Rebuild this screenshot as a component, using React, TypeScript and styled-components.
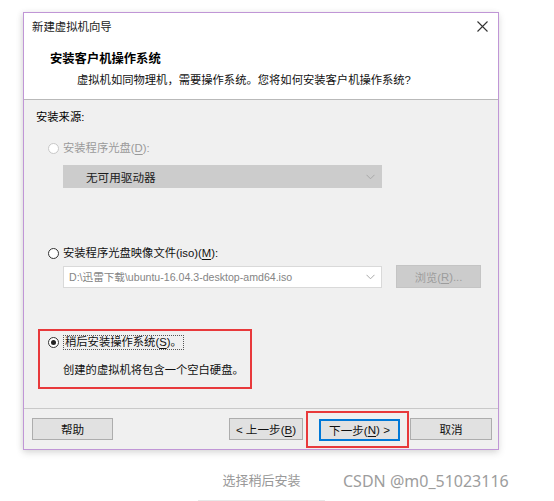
import styled, { createGlobalStyle } from 'styled-components'

const GlobalStyle = createGlobalStyle`
  html, body {
    margin: 0;
    padding: 0;
    background: #ffffff;
  }
  body {
    font-family: "Liberation Sans", "Noto Sans CJK SC", sans-serif;
    font-size: 11.3px;
    color: #000;
  }
  * {
    box-sizing: border-box;
  }
`

const Page = styled.div`
  width: 554px;
  height: 501px;
  padding: 12px 0 0 23px;
  overflow: hidden;
`

const Window = styled.div`
  width: 476px;
  height: 438px;
  border: 1px solid #c096d6;
  background: #f0f0f0;
  display: flex;
  flex-direction: column;
  box-shadow: 0 3px 7px rgba(0, 0, 0, 0.13), -2px 0 6px rgba(0, 0, 0, 0.06);
`

const TitleBar = styled.div`
  height: 28px;
  background: #fff;
  display: flex;
  align-items: center;
  justify-content: space-between;
  padding: 0 10px 1px 8px;
  font-size: 11.4px;
  line-height: 16px;
  color: #1a1a1a;
`

const Header = styled.div`
  height: 59px;
  background: #fff;
  border-bottom: 1px solid #b9b9b9;
  padding: 10px 0 0 26px;
`

const HeaderTitle = styled.div`
  font-size: 12.3px;
  font-weight: 700;
  line-height: 17px;
`

const HeaderText = styled.div`
  line-height: 16px;
  margin: 4px 0 0 27px;
  color: #111;
`

const Body = styled.div`
  flex: 1;
  padding: 9px 0 0 12px;
  display: flex;
  flex-direction: column;
  align-items: flex-start;
`

const GroupLabel = styled.div`
  line-height: 16px;
`

const OptionRow = styled.label<{ $top: number; $indent?: number; $disabled?: boolean }>`
  display: flex;
  align-items: center;
  gap: 4px;
  margin: ${(p) => p.$top}px 0 0 ${(p) => p.$indent ?? 12}px;
  line-height: 16px;
  white-space: nowrap;
  color: ${(p) => (p.$disabled ? '#9a9a9a' : '#111')};
`

const Radio = styled.span<{ $checked?: boolean; $disabled?: boolean }>`
  width: 11px;
  height: 11px;
  border-radius: 50%;
  border: 1px solid ${(p) => (p.$disabled ? '#c8c8c8' : '#333')};
  background: #fff;
  display: flex;
  align-items: center;
  justify-content: center;
  flex-shrink: 0;

  &::after {
    content: '';
    display: ${(p) => (p.$checked ? 'block' : 'none')};
    width: 5px;
    height: 5px;
    border-radius: 50%;
    background: #222;
  }
`

const Key = styled.span`
  text-decoration: underline;
  text-underline-offset: 2px;
`

const FieldRow = styled.div<{ $top: number }>`
  display: flex;
  align-items: center;
  gap: 14px;
  margin: ${(p) => p.$top}px 0 0 27px;
`

const Select = styled.div<{ $variant: 'disabled' | 'input' }>`
  width: 319px;
  height: ${(p) => (p.$variant === 'disabled' ? 23 : 22)}px;
  display: flex;
  align-items: center;
  justify-content: space-between;
  white-space: nowrap;
  font-size: ${(p) => (p.$variant === 'disabled' ? 11.6 : 10.6)}px;
  padding: ${(p) => (p.$variant === 'disabled' ? '0 6px 0 22px' : '0 6px 0 5px')};
  background: ${(p) => (p.$variant === 'disabled' ? '#cccccc' : '#ffffff')};
  border: 1px solid ${(p) => (p.$variant === 'disabled' ? '#cccccc' : '#d9d9d9')};
  color: ${(p) => (p.$variant === 'disabled' ? '#1a1a1a' : '#858585')};
`

const Chevron = () => (
  <svg width="9" height="6" viewBox="0 0 9 6">
    <polyline points="0.5,0.8 4.5,4.8 8.5,0.8" fill="none" stroke="#a8a8a8" strokeWidth="1" />
  </svg>
)

const BrowseButton = styled.div`
  width: 85px;
  height: 23px;
  background: #cccccc;
  border: 1px solid #c4c4c4;
  color: #9c9c9c;
  display: flex;
  align-items: center;
  justify-content: center;
`

const Highlight = styled.div`
  width: 214px;
  height: 60px;
  margin: 41px 0 0 2px;
  border: 2px solid #e8393b;
  padding: 4px 0 0 8px;
`

const FocusLabel = styled.span`
  border: 1px dotted #555;
  line-height: 13px;
  padding: 0 1px;
`

const Description = styled.div`
  margin: 12px 0 0 15px;
  line-height: 16px;
  white-space: nowrap;
  color: #111;
`

const Footer = styled.div`
  height: 41px;
  border-top: 1px solid #c9c9c9;
  display: flex;
  align-items: center;
  padding: 0 6px 0 8px;
`

const Button = styled.div<{ $width: number; $primary?: boolean }>`
  width: ${(p) => p.$width}px;
  height: 22px;
  background: #e1e1e1;
  border: ${(p) => (p.$primary ? '2px solid #0078d7' : '1px solid #adadad')};
  font-size: 11.6px;
  display: flex;
  align-items: center;
  justify-content: center;
  white-space: pre;
  color: #111;
`

const Spacer = styled.div`
  flex: 1;
`

const NextFrame = styled.div`
  margin: 0 1px 0 3px;
  border: 2px solid #e8393b;
  padding: 6px 7px 5px 11px;
`

const CaptionRow = styled.div`
  display: flex;
  align-items: flex-end;
  margin: 21px 0 0 175px;
`

const Caption = styled.div`
  width: 127px;
  text-align: center;
  font-family: "Noto Sans CJK SC", sans-serif;
  font-size: 13px;
  line-height: 18px;
  color: #999;
  padding-bottom: 11px;
  border-bottom: 1px solid #e8e8e8;
`

const Watermark = styled.div`
  margin: 0 0 11px 18px;
  font-family: "Noto Sans", "Liberation Sans", sans-serif;
  font-size: 16px;
  line-height: 18px;
  color: #9d9d9d;
`

const CloseIcon = () => (
  <svg width="11" height="11" viewBox="0 0 11 11">
    <path d="M0.5 0.5 L10.5 10.5 M10.5 0.5 L0.5 10.5" stroke="#333" strokeWidth="1.1" fill="none" />
  </svg>
)

const App = () => (
  <>
    <GlobalStyle />
    <Page>
      <Window>
        <TitleBar>
          <span>新建虚拟机向导</span>
          <CloseIcon />
        </TitleBar>
        <Header>
          <HeaderTitle>安装客户机操作系统</HeaderTitle>
          <HeaderText>虚拟机如同物理机，需要操作系统。您将如何安装客户机操作系统?</HeaderText>
        </Header>
        <Body>
          <GroupLabel>安装来源:</GroupLabel>
          <OptionRow $top={15} $disabled>
            <Radio $disabled />
            <span>
              安装程序光盘(<Key>D</Key>):
            </span>
          </OptionRow>
          <FieldRow $top={9}>
            <Select $variant="disabled">
              <span>无可用驱动器</span>
              <Chevron />
            </Select>
          </FieldRow>
          <OptionRow $top={57}>
            <Radio />
            <span>
              安装程序光盘映像文件(iso)(<Key>M</Key>):
            </span>
          </OptionRow>
          <FieldRow $top={4}>
            <Select $variant="input">
              <span>D:\迅雷下载\ubuntu-16.04.3-desktop-amd64.iso</span>
              <Chevron />
            </Select>
            <BrowseButton>
              浏览(<Key>R</Key>)...
            </BrowseButton>
          </FieldRow>
          <Highlight>
            <OptionRow $top={0} $indent={0}>
              <Radio $checked />
              <FocusLabel>
                稍后安装操作系统(<Key>S</Key>)。
              </FocusLabel>
            </OptionRow>
            <Description>创建的虚拟机将包含一个空白硬盘。</Description>
          </Highlight>
        </Body>
        <Footer>
          <Button $width={81}>帮助</Button>
          <Spacer />
          <Button $width={74}>
            &lt; 上一步(<Key>B</Key>)
          </Button>
          <NextFrame>
            <Button $width={81} $primary>
              下一步(<Key>N</Key>) &gt;
            </Button>
          </NextFrame>
          <Button $width={82}>取消</Button>
        </Footer>
      </Window>
      <CaptionRow>
        <Caption>选择稍后安装</Caption>
        <Watermark>CSDN @m0_51023116</Watermark>
      </CaptionRow>
    </Page>
  </>
)

export default App
